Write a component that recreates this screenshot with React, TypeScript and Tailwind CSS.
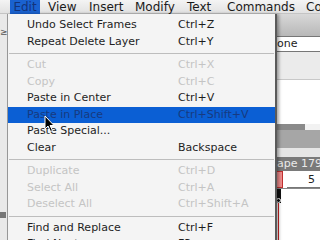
import React from "react";

type Item = { label?: string; shortcut?: string; disabled?: boolean; active?: boolean; sep?: boolean };

const items: Item[] = [
  { label: "Undo Select Frames", shortcut: "Ctrl+Z" },
  { label: "Repeat Delete Layer", shortcut: "Ctrl+Y" },
  { sep: true },
  { label: "Cut", shortcut: "Ctrl+X", disabled: true },
  { label: "Copy", shortcut: "Ctrl+C", disabled: true },
  { label: "Paste in Center", shortcut: "Ctrl+V" },
  { label: "Paste in Place", shortcut: "Ctrl+Shift+V", active: true },
  { label: "Paste Special...", shortcut: "" },
  { label: "Clear", shortcut: "Backspace" },
  { sep: true },
  { label: "Duplicate", shortcut: "Ctrl+D", disabled: true },
  { label: "Select All", shortcut: "Ctrl+A", disabled: true },
  { label: "Deselect All", shortcut: "Ctrl+Shift+A", disabled: true },
  { sep: true },
  { label: "Find and Replace", shortcut: "Ctrl+F" },
  { label: "Find Next", shortcut: "F3" },
];

export default function App() {
  return (
    <div
      className="relative w-[320px] h-[240px] overflow-hidden bg-[#f2f2f2] text-[11px] text-[#1a1a1a]"
      style={{ fontFamily: '"DejaVu Sans", Verdana, sans-serif' }}
    >
      {/* Menu bar */}
      <div className="h-[14px] flex items-center bg-gradient-to-b from-[#f4f4f4] to-[#e2e2e2] border-b border-[#c4c4c4] whitespace-nowrap text-[12px] text-[#1a1a1a]">
        <div className="w-[10px] shrink-0" />
        <div className="h-[14px] w-[30px] shrink-0 flex items-center justify-center bg-[#1a62d0] text-[#13337a]">Edit</div>
        <div className="w-[8px] shrink-0" />
        <div className="w-[41px] shrink-0">View</div>
        <div className="w-[46px] shrink-0">Insert</div>
        <div className="w-[52px] shrink-0">Modify</div>
        <div className="w-[40px] shrink-0">Text</div>
        <div className="w-[79px] shrink-0">Commands</div>
        <div className="shrink-0">Co</div>
      </div>

      {/* Background app (right side) */}
      <div className="flex h-[226px]">
        <div className="w-[8px] bg-[#e9e9e9] border-r border-[#9a9a9a] relative">
          <div className="absolute top-[12px] left-[0px] text-[9px] text-[#555]">≥</div>
          <div className="absolute top-[198px] left-[0px] w-[6px] h-[6px] bg-[#777]" />
        </div>
        <div className="flex-1" />
        <div className="w-[43px] flex flex-col">
          <div className="h-[22px] bg-gradient-to-b from-[#d8d8d8] to-[#b8b8b8]" />
          <div className="h-[16px] bg-white border-y border-[#777] text-[11px] text-[#222] leading-[14px]">one</div>
          <div className="h-[28px] bg-[#ebebeb] border-b border-[#c8c8c8]" />
          <div className="h-[44px] bg-white" />
          <div className="h-[6px] bg-[#8a8a8a] w-[28px]" />
          <div className="h-[18px] bg-[#a6a6a6]" />
          <div className="h-[9px] bg-[#e6e6e6]" />
          <div className="h-[14px] bg-[#7a7a7a] text-[#eaeaea] text-[11px] leading-[14px] whitespace-nowrap overflow-hidden">ape 179</div>
          <div className="h-[18px] bg-white border-b border-[#888] relative">
            <div className="absolute left-[-1px] top-[0px] w-[7px] h-[17px] bg-[#f08c8c] border border-[#c03030]" />
            <div className="absolute left-[31px] top-[1px] text-[11px] text-[#222]">5</div>
            <div className="absolute left-[10px] bottom-0 w-[33px] h-[3px] border-b border-[#777]" />
          </div>
          <div className="flex-1 bg-white relative">
            <div className="absolute left-[1px] top-[0px] w-[1px] h-full bg-[#d02020]" />
            <div className="absolute left-[-1px] top-[0px] w-[5px] h-[14px] bg-[#111]" />
            <div className="absolute left-[-1px] top-[9px] w-[5px] h-[5px] rounded-full border border-white" />
          </div>
        </div>
      </div>

      {/* Dropdown menu */}
      <div className="absolute left-[8px] top-[14px] w-[269px] h-[240px] bg-[#f4f4f4] border-r-2 border-[#5a5a5a] shadow-[2px_0_3px_rgba(0,0,0,0.35)] pt-[3px]">
        {items.map((it, i) =>
          it.sep ? (
            <div key={i} className="h-[7px] flex items-center">
              <div className="h-[1px] w-full bg-[#bdbdbd] mx-[1px]" />
            </div>
          ) : (
            <div
              key={i}
              className={
                "h-[16.5px] flex items-center whitespace-nowrap " +
                (it.active ? "bg-[#0b5fd4] text-[#173a80]" : it.disabled ? "text-[#c4c4c4]" : "text-[#1e1e1e]")
              }
            >
              <div className="w-[170px] pl-[19px]">{it.label}</div>
              <div>{it.shortcut}</div>
            </div>
          )
        )}
      </div>

      {/* Cursor */}
      <svg className="absolute left-[44px] top-[115px]" width="12" height="18" viewBox="0 0 12 18">
        <path d="M1 1 L1 14 L4 11 L6.5 16.5 L8.5 15.5 L6 10.5 L10 10.5 Z" fill="#000" stroke="#fff" strokeWidth="1" />
      </svg>
    </div>
  );
}
